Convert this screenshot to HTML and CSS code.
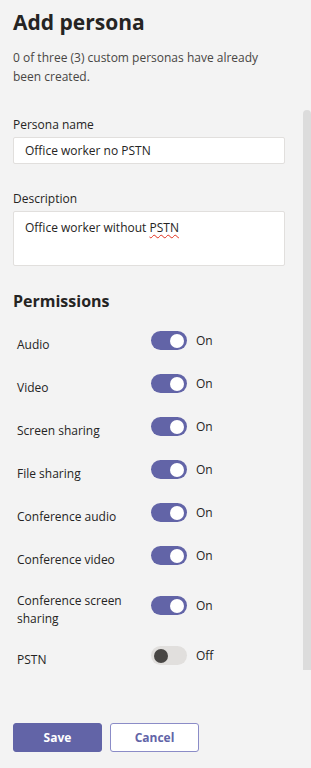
FILE: index.html
```html
<!DOCTYPE html>
<html lang="en">
<head>
<meta charset="utf-8">
<title>Add persona</title>
<link rel="stylesheet" href="styles.css">
</head>
<body>
<div class="panel">
  <h1 class="title">Add persona</h1>
  <p class="subtitle">0 of three (3) custom personas have already been created.</p>

  <div class="field">
    <label class="field-label">Persona name</label>
    <div class="input">Office worker no PSTN</div>
  </div>

  <div class="field field-desc">
    <label class="field-label">Description</label>
    <div class="input textarea">Office worker without <span class="spell">PSTN</span></div>
  </div>

  <h2 class="section">Permissions</h2>

  <div class="perms">
    <div class="perm"><span class="perm-label">Audio</span><span class="toggle on"><span class="track"><span class="knob"></span></span><span class="state">On</span></span></div>
    <div class="perm"><span class="perm-label">Video</span><span class="toggle on"><span class="track"><span class="knob"></span></span><span class="state">On</span></span></div>
    <div class="perm"><span class="perm-label">Screen sharing</span><span class="toggle on"><span class="track"><span class="knob"></span></span><span class="state">On</span></span></div>
    <div class="perm"><span class="perm-label">File sharing</span><span class="toggle on"><span class="track"><span class="knob"></span></span><span class="state">On</span></span></div>
    <div class="perm"><span class="perm-label">Conference audio</span><span class="toggle on"><span class="track"><span class="knob"></span></span><span class="state">On</span></span></div>
    <div class="perm"><span class="perm-label">Conference video</span><span class="toggle on"><span class="track"><span class="knob"></span></span><span class="state">On</span></span></div>
    <div class="perm"><span class="perm-label">Conference screen sharing</span><span class="toggle on"><span class="track"><span class="knob"></span></span><span class="state">On</span></span></div>
    <div class="perm"><span class="perm-label">PSTN</span><span class="toggle off"><span class="track"><span class="knob"></span></span><span class="state">Off</span></span></div>
  </div>

  <div class="actions">
    <button class="btn btn-primary">Save</button>
    <button class="btn btn-secondary">Cancel</button>
  </div>
</div>
<div class="scroll-thumb"></div>
</body>
</html>
```

FILE: styles.css
```css
html, body {
  margin: 0;
  padding: 0;
  background: #f3f3f3;
}
body {
  font-family: "Open Sans", "Noto Sans", sans-serif;
  color: #252423;
  position: relative;
  min-height: 768px;
  overflow: hidden;
}
.panel {
  padding: 0 26px 0 13px;
}
.title {
  margin: 0;
  padding-top: 7px;
  font-size: 21px;
  line-height: 30px;
  font-weight: 700;
  color: #252423;
}
.subtitle {
  margin: 11px 0 0;
  font-size: 12px;
  line-height: 19px;
  color: #484644;
  padding-right: 20px;
}
.field {
  margin-top: 30px;
}
.field-desc {
  margin-top: 26px;
}
.field-label {
  display: block;
  font-size: 12px;
  line-height: 18px;
  color: #252423;
  margin-bottom: 3px;
}
.input {
  box-sizing: border-box;
  background: #fff;
  border: 1px solid #e1dfdd;
  border-radius: 2px;
  height: 27px;
  padding: 0 11px;
  font-size: 12px;
  line-height: 25px;
  color: #252423;
}
.textarea {
  height: 55px;
  padding-top: 3px;
}
.spell {
  text-decoration: underline wavy #e0301e;
  text-decoration-thickness: 1px;
  text-underline-offset: 2px;
}
.section {
  margin: 24px 0 0;
  font-size: 16px;
  line-height: 22px;
  font-weight: 700;
  color: #252423;
}
.perms {
  margin-top: 19px;
  display: flex;
  flex-direction: column;
  gap: 15px;
  padding-left: 4px;
}
.perm {
  display: flex;
  align-items: center;
}
.perm-label {
  width: 134px;
  font-size: 12px;
  line-height: 18px;
  padding: 3px 0;
  color: #252423;
}
.toggle {
  display: flex;
  align-items: center;
  margin-bottom: 9px;
  height: 19px;
}
.track {
  box-sizing: border-box;
  width: 36px;
  height: 19px;
  border-radius: 10px;
  display: flex;
  align-items: center;
  padding: 0 3px;
}
.knob {
  width: 14px;
  height: 14px;
  border-radius: 50%;
}
.on .track {
  background: #6264a7;
  justify-content: flex-end;
}
.on .knob {
  background: #fff;
}
.off .track {
  background: #e1dfdd;
  justify-content: flex-start;
}
.off .knob {
  background: #484644;
}
.state {
  margin-left: 9px;
  font-size: 12px;
  line-height: 18px;
  color: #252423;
}
.actions {
  margin-top: 49px;
  display: flex;
  gap: 8px;
}
.btn {
  box-sizing: border-box;
  width: 89px;
  height: 29px;
  border-radius: 3px;
  font-family: "Open Sans", "Noto Sans", sans-serif;
  font-size: 12px;
  font-weight: 700;
  padding: 0;
}
.btn-primary {
  background: #6264a7;
  color: #fff;
  border: 1px solid #6264a7;
}
.btn-secondary {
  background: #fff;
  color: #6264a7;
  border: 1px solid #8b8cc7;
}
.scroll-thumb {
  position: absolute;
  left: 303px;
  top: 110px;
  width: 8px;
  height: 560px;
  background: #dcdcdc;
  border-radius: 4px 4px 0 0;
}
```
